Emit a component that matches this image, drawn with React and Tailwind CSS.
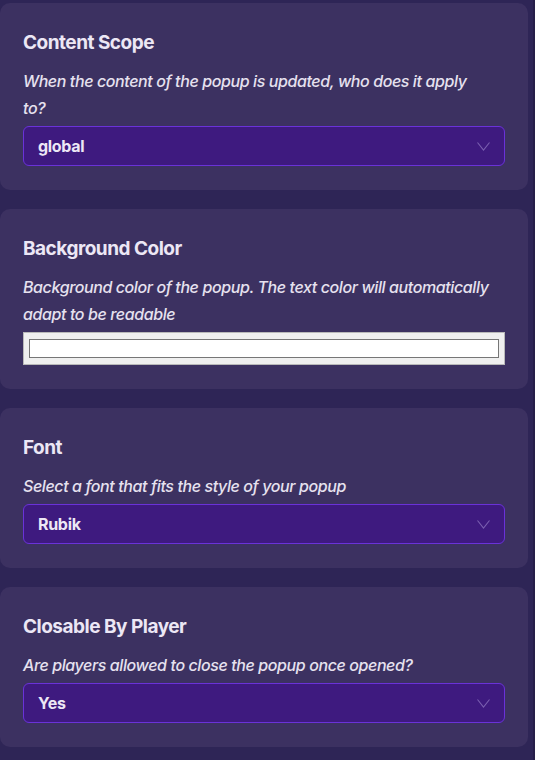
import { useState } from 'react';

function Chevron() {
  return (
    <svg width="13" height="9" viewBox="0 0 13 9" fill="none" className="text-[#7a5fb0]">
      <path d="M0.5 0.5l6 7.5 6-7.5" stroke="currentColor" strokeWidth="1.1" />
    </svg>
  );
}

function SelectBox({ value }) {
  return (
    <div className="h-[40px] w-full rounded-[6px] border border-[#6a32d8] bg-[#3e1a7f] flex items-center justify-between pl-[14px] pr-[14px]">
      <span className="text-[16px] font-bold text-[#ece7f5] tracking-[-0.3px]">{value}</span>
      <Chevron />
    </div>
  );
}

function ColorBox() {
  return (
    <div className="h-[33px] w-full bg-[#efefef] border border-[#b9b9b9] px-[5px] pt-[6px]">
      <div className="h-[19px] w-full bg-white border border-[#767676]" />
    </div>
  );
}

function Card({ title, description, children }) {
  return (
    <div className="w-[528px] rounded-[10px] bg-[#3c3161] px-[23px] pt-[28px] pb-[24px]">
      <h2 className="text-[19px] leading-[24px] font-bold text-[#ece7f5] tracking-[-0.5px]">{title}</h2>
      <p className="mt-[13px] w-[474px] text-[16px] leading-[27px] italic font-medium text-[#e6e1ef] tracking-[-0.4px]">
        {description}
      </p>
      <div className="mt-[4px]">{children}</div>
    </div>
  );
}

export default function App() {
  const [scope] = useState('global');
  return (
    <div
      className="min-h-[760px] w-[535px] bg-[#2e2556] pt-[3px] flex flex-col gap-[19px] overflow-hidden border-r-[2px] border-[#261e48]"
      style={{ fontFamily: 'Inter, "Liberation Sans", sans-serif' }}
    >
      <Card
        title="Content Scope"
        description={
          <>
            When the content of the popup is updated, who does it apply
            <br />
            to?
          </>
        }
      >
        <SelectBox value={scope} />
      </Card>
      <Card
        title="Background Color"
        description="Background color of the popup. The text color will automatically adapt to be readable"
      >
        <ColorBox />
      </Card>
      <Card title="Font" description="Select a font that fits the style of your popup">
        <SelectBox value="Rubik" />
      </Card>
      <Card title="Closable By Player" description="Are players allowed to close the popup once opened?">
        <SelectBox value="Yes" />
      </Card>
    </div>
  );
}
